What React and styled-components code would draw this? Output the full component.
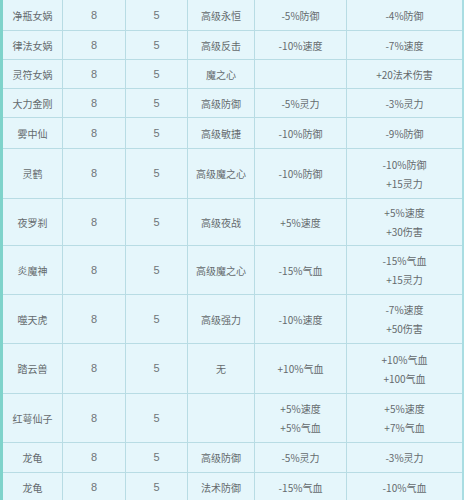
import React from "react";
import styled, { createGlobalStyle } from "styled-components";

const GlobalStyle = createGlobalStyle`
  html, body {
    margin: 0;
    padding: 0;
    background: #e5f6fb;
  }
`;

const rows = [
  { name: "净瓶女娲", h: 31, skill: "高级永恒", a: ["-5%防御"], b: ["-4%防御"] },
  { name: "律法女娲", h: 29, skill: "高级反击", a: ["-10%速度"], b: ["-7%速度"] },
  { name: "灵符女娲", h: 29, skill: "魔之心", a: [], b: ["+20法术伤害"] },
  { name: "大力金刚", h: 29, skill: "高级防御", a: ["-5%灵力"], b: ["-3%灵力"] },
  { name: "雾中仙", h: 31, skill: "高级敏捷", a: ["-10%防御"], b: ["-9%防御"] },
  { name: "灵鹤", h: 50, skill: "高级魔之心", a: ["-10%防御"], b: ["-10%防御", "+15灵力"] },
  { name: "夜罗刹", h: 47, skill: "高级夜战", a: ["+5%速度"], b: ["+5%速度", "+30伤害"] },
  { name: "炎魔神", h: 49, skill: "高级魔之心", a: ["-15%气血"], b: ["-15%气血", "+15灵力"] },
  { name: "噬天虎", h: 49, skill: "高级强力", a: ["-10%速度"], b: ["-7%速度", "+50伤害"] },
  { name: "踏云兽", h: 50, skill: "无", a: ["+10%气血"], b: ["+10%气血", "+100气血"] },
  { name: "红萼仙子", h: 49, skill: "", a: ["+5%速度", "+5%气血"], b: ["+5%速度", "+7%气血"] },
  { name: "龙龟", h: 30, skill: "高级防御", a: ["-5%灵力"], b: ["-3%灵力"] },
  { name: "龙龟", h: 30, skill: "法术防御", a: ["-15%气血"], b: ["-10%气血"] },
];

const Table = styled.div`
  width: 464px;
  height: 500px;
  overflow: hidden;
  box-sizing: border-box;
  border-left: 3px solid #7fd3cb;
  border-right: 2px solid #a9dde2;
  background: #e5f6fb;
  font-family: "Noto Sans CJK SC", "Noto Sans", sans-serif;
  color: #646a6d;
`;

const Row = styled.div`
  display: grid;
  grid-template-columns: 60px 63px 62px 67px 92px 1fr;
  height: ${(p) => p.$h}px;
`;

const Cell = styled.div`
  box-sizing: border-box;
  border-bottom: 1px solid #b8dce4;
  border-right: 1px solid #b8dce4;
  display: flex;
  flex-direction: column;
  align-items: center;
  justify-content: center;
  font-size: 10px;
  line-height: 19px;
  text-align: center;
  white-space: nowrap;

  &:last-child {
    border-right: none;
  }
`;

const Num = styled.span`
  font-family: "Liberation Sans", sans-serif;
  font-size: 11px;
  color: #6e7477;
`;

function Lines({ items }) {
  return items.map((t, i) => <span key={i}>{t}</span>);
}

export default function App() {
  return (
    <>
      <GlobalStyle />
      <Table>
        {rows.map((r, i) => (
          <Row key={i} $h={r.h}>
            <Cell>{r.name}</Cell>
            <Cell><Num>8</Num></Cell>
            <Cell><Num>5</Num></Cell>
            <Cell>{r.skill}</Cell>
            <Cell><Lines items={r.a} /></Cell>
            <Cell><Lines items={r.b} /></Cell>
          </Row>
        ))}
      </Table>
    </>
  );
}
